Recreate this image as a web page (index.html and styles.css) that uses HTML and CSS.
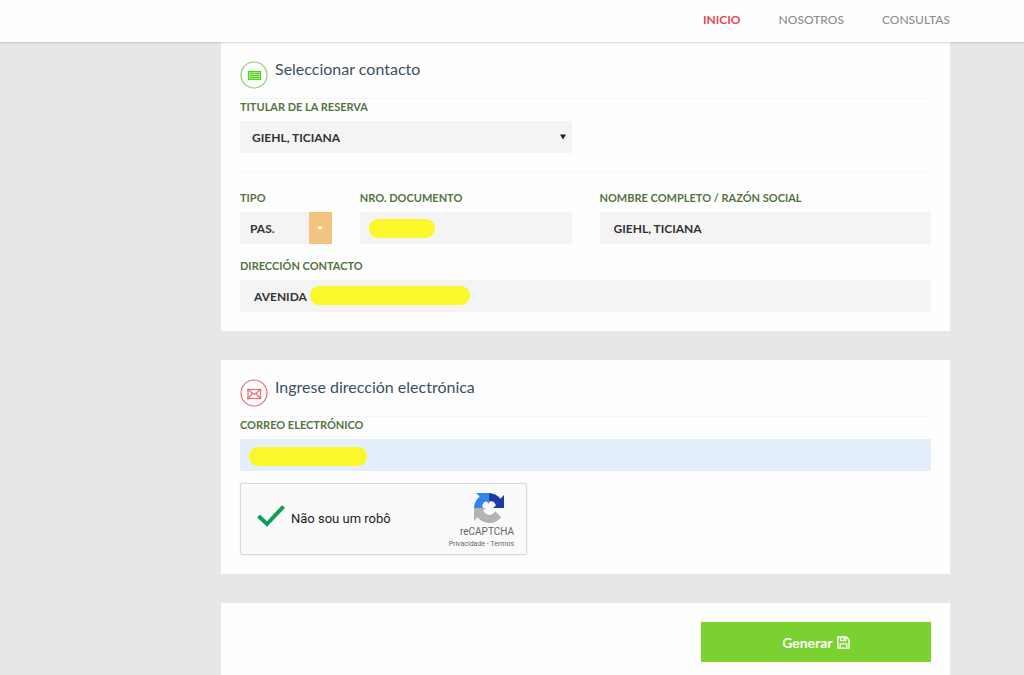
FILE: index.html
```html
<!DOCTYPE html>
<html lang="es">
<head>
<meta charset="utf-8">
<meta name="viewport" content="width=device-width, initial-scale=1">
<title>Seleccionar contacto</title>
<link rel="stylesheet" href="styles.css">
</head>
<body>
<header class="topbar">
  <nav class="nav">
    <a class="nav-link active" href="#">INICIO</a>
    <a class="nav-link" href="#">NOSOTROS</a>
    <a class="nav-link" href="#">CONSULTAS</a>
  </nav>
</header>
<main class="content">
  <section class="card">
    <div class="card-head">
      <svg class="head-icon green" viewBox="0 0 28 28" aria-hidden="true">
        <circle cx="14" cy="14" r="13" fill="none" stroke="currentColor" stroke-width="1.2"/>
        <rect x="8.500" y="10.500" width="12" height="8" fill="#a5f07c" stroke="#5cc934" stroke-width="1.200"/>
        <path d="M10 12.500h3.500M10 14.500h9M10 16.500h9M15 12.500h4" stroke="#5cc934" stroke-width="1"/>
      </svg>
      <h2 class="card-title">Seleccionar contacto</h2>
    </div>
    <div class="grid">
      <div class="field half">
        <label class="label" for="titular">TITULAR DE LA RESERVA</label>
        <div class="control">
          <select class="input native" id="titular"><option>GIEHL, TICIANA</option></select>
          <svg class="caret" viewBox="0 0 6 6" aria-hidden="true"><path d="M0 0.500h6L3 5.500z" fill="#222"/></svg>
        </div>
      </div>
    </div>
    <hr class="rule">
    <div class="grid">
      <div class="field sixth">
        <label class="label" for="tipo">TIPO</label>
        <div class="control">
          <select class="input compact" id="tipo"><option>PAS.</option></select>
          <span class="drop"><svg class="drop-caret" viewBox="0 0 6 5" aria-hidden="true"><path d="M0 0.500h6L3 4.500z" fill="#fff"/></svg></span>
        </div>
      </div>
      <div class="field third">
        <label class="label" for="documento">NRO. DOCUMENTO</label>
        <div class="control">
          <input class="input" id="documento" type="text">
          <span class="marker marker-document"></span>
        </div>
      </div>
      <div class="field half">
        <label class="label" for="nombre">NOMBRE COMPLETO / RAZÓN SOCIAL</label>
        <div class="control"><input class="input" id="nombre" type="text" value="GIEHL, TICIANA"></div>
      </div>
      <div class="field full">
        <label class="label" for="direccion">DIRECCIÓN CONTACTO</label>
        <div class="control">
          <input class="input" id="direccion" type="text" value="AVENIDA">
          <span class="marker marker-address"></span>
        </div>
      </div>
    </div>
  </section>

  <section class="card">
    <div class="card-head">
      <svg class="head-icon red" viewBox="0 0 28 28" aria-hidden="true">
        <circle cx="14" cy="14" r="13" fill="none" stroke="currentColor" stroke-width="1.2"/>
        <g fill="none" stroke="currentColor" stroke-width="1.200"><rect x="8" y="10.500" width="12.500" height="9"/><path d="M8 10.500l6.250 5 6.250-5M8 19.500l4.500-5M20.500 19.500l-4.500-5"/></g>
        <path d="M7.200 9.700h2v2h-2zM19.300 9.700h2v2h-2zM7.200 18.300h2v2h-2zM19.300 18.300h2v2h-2z" fill="currentColor"/>
      </svg>
      <h2 class="card-title">Ingrese dirección electrónica</h2>
    </div>
    <div class="field">
      <label class="label" for="correo">CORREO ELECTRÓNICO</label>
      <div class="control">
        <input class="input autofilled" id="correo" type="email">
        <span class="marker marker-email"></span>
      </div>
    </div>
    <div class="captcha">
      <label class="captcha-check">
        <input class="captcha-input" type="checkbox" checked>
        <svg class="tick" viewBox="0 0 28 22" aria-hidden="true"><path d="M1.500 11l8.500 8L26.500 1.500" fill="none" stroke="#0f9d58" stroke-width="4"/></svg>
        <span>Não sou um robô</span>
      </label>
      <div class="captcha-brand">
        <svg class="captcha-logo" viewBox="0 0 64 64" aria-hidden="true">
          <path fill="#1c3aa9" d="M64 32V4.500l-7.600 7.600C50.200 4.500 41 0 31.300 0v19.300c3.800-2.400 9-1.800 12.200 1.700 1.500 1.500 2.600 3.400 3.100 5.600L40.500 32z"/>
          <path fill="#2f86ee" d="M31.800 0H4.400l7.700 7.600C4.600 13.800 0 23 0 32.700h19.300c-2.400-3.800-1.800-9 1.700-12.200 1.500-1.500 3.400-2.600 5.600-3.100l5.200 6.100z"/>
          <path fill="#b4b4b4" d="M0 32v27.500l7.600-7.600C13.800 59.500 23 64 32.700 64 43 64 52.200 59 58 51.500L45.500 39c-1.200 2.300-3 4.100-5.200 5.200-2.400 1.800-5.700 3.300-10.200 2.200-5.200-1.500-9.200-5-10.700-9l6.500-5.400z"/>
        </svg>
        <span class="captcha-name">reCAPTCHA</span>
        <span class="captcha-legal"><a href="#">Privacidade</a> - <a href="#">Termos</a></span>
      </div>
    </div>
  </section>

  <section class="card actions">
    <button class="submit" type="button">
      <span>Generar</span>
      <svg class="save" viewBox="0 0 14 14" aria-hidden="true"><g fill="none" stroke="#fff" stroke-width="1.500" stroke-linejoin="round"><path d="M1 1h9l3 3v9H1z"/><path d="M3.500 13V8.500h7V13M4 1v4h5.500V1"/><path d="M7.500 1.500v2.500"/></g></svg>
    </button>
  </section>
</main>
</body>
</html>
```

FILE: styles.css
```css
* { box-sizing: border-box; }

body {
  margin: 0;
  background: #e7e7e7;
  font-family: Lato, "Liberation Sans", sans-serif;
  color: #333;
}

.topbar {
  position: relative;
  display: flex;
  justify-content: flex-end;
  align-items: center;
  height: 42px;
  padding: 0 74px 2px 24px;
  background: #fefefe;
  box-shadow: 0 1px 2px rgba(0, 0, 0, 0.16);
}
.nav { display: flex; gap: 38px; }
.nav-link {
  color: #8e8e8e;
  font-size: 12px;
  line-height: 16px;
  font-weight: 500;
  text-decoration: none;
}
.nav-link.active { color: #e8474f; font-weight: 700; }

.content {
  display: flex;
  flex-direction: column;
  gap: 29px;
  padding: 0 74px 0 221px;
}
.card { padding: 19px; background: #fefefe; }

.card-head {
  display: flex;
  gap: 7px;
  height: 38px;
  border-bottom: 1px solid #f5f5f5;
}
.head-icon { width: 28px; height: 28px; }
.green { color: #8fd070; }
.red { color: #e8707a; }
.card-title {
  margin: 0;
  color: #3b5060;
  font-size: 16px;
  line-height: 16px;
  font-weight: 400;
}

.grid {
  display: grid;
  grid-template-columns: repeat(12, minmax(0, 1fr));
  column-gap: 28px;
  row-gap: 14px;
}
.sixth { grid-column: span 2; }
.third { grid-column: span 4; }
.half { grid-column: span 6; }
.full { grid-column: span 12; }

.label {
  display: block;
  padding: 0 0 6px;
  color: #54733f;
  font-size: 11px;
  line-height: 16px;
  font-weight: 700;
}
.control { position: relative; }
.input {
  display: block;
  width: 100%;
  height: 32px;
  padding: 0 14px;
  border: 0;
  border-radius: 0;
  appearance: none;
  background: #f4f4f4;
  color: #333;
  font-family: inherit;
  font-size: 12px;
  font-weight: 700;
}
.native { padding: 0 24px 0 12px; }
.compact { padding: 0 24px 0 10px; }
.autofilled { background: #e5effb; }
.caret {
  position: absolute;
  top: 13px;
  right: 6px;
  width: 6px;
  height: 6px;
  pointer-events: none;
}
.drop {
  position: absolute;
  inset: 0 0 0 auto;
  display: flex;
  align-items: center;
  justify-content: center;
  width: 23px;
  background: #f3c47f;
  pointer-events: none;
}
.drop-caret { width: 6px; height: 5px; }
.rule {
  margin: 18px 0;
  border: 0;
  border-top: 1px solid #f5f5f5;
}

.marker {
  position: absolute;
  height: 19px;
  border-radius: 9px;
  background: #fbf72b;
}
.marker-document { top: 7px; left: 9px; width: 66px; }
.marker-address { top: 6px; left: 70px; width: 160px; }
.marker-email { top: 8px; left: 9px; width: 118px; }

.captcha {
  display: flex;
  justify-content: space-between;
  align-items: center;
  width: 287px;
  max-width: 100%;
  height: 72px;
  margin-top: 12px;
  padding: 0 12px 0 16px;
  border: 1px solid #d8d8d8;
  border-radius: 2px;
  background: #fafafa;
  box-shadow: 0 0 3px rgba(0, 0, 0, 0.08);
  font-family: Roboto, "Liberation Sans", sans-serif;
}
.captcha-check {
  position: relative;
  display: flex;
  align-items: center;
  gap: 6px;
  color: #222;
  font-size: 13px;
  line-height: 18px;
}
.captcha-input {
  position: absolute;
  inset: 0 auto 0 0;
  width: 28px;
  margin: 0;
  opacity: 0;
}
.tick { width: 28px; height: 22px; margin-bottom: 6px; }
.captcha-brand {
  display: flex;
  flex-direction: column;
  align-items: flex-end;
  color: #666;
}
.captcha-logo { width: 30px; height: 30px; margin: 4px 10px 2px 0; }
.captcha-name { font-size: 10px; line-height: 14px; }
.captcha-legal { font-size: 7px; line-height: 10px; }
.captcha-legal a { color: inherit; text-decoration: none; }

.actions { display: flex; justify-content: flex-end; }
.submit {
  display: flex;
  align-items: center;
  justify-content: center;
  gap: 4px;
  width: 33.3333%;
  height: 40px;
  border: 0;
  background: #7bd12f;
  color: #fff;
  font-family: inherit;
  font-size: 14px;
  font-weight: 700;
}
.save { width: 13px; height: 13px; }
```
